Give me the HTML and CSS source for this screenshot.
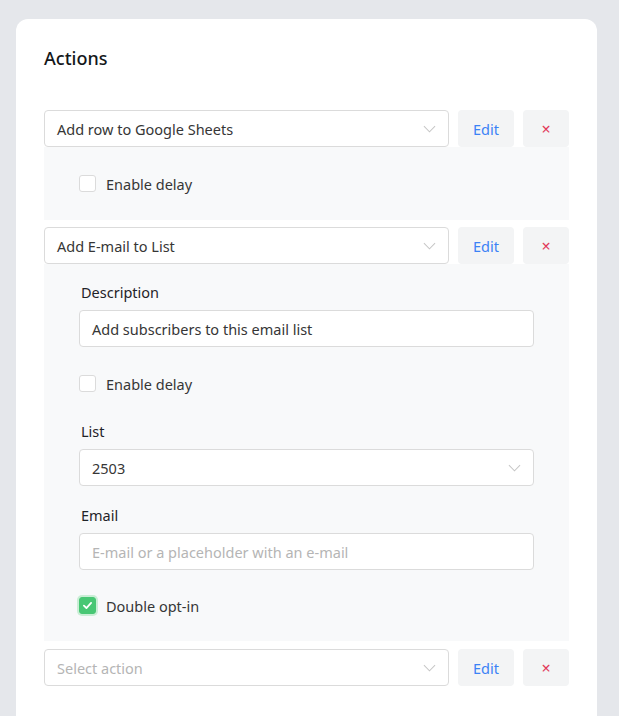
FILE: index.html
```html
<!DOCTYPE html>
<html>
<head>
<meta charset="utf-8">
<link rel="stylesheet" href="styles.css">
</head>
<body>
<div class="card">
  <h2 class="title">Actions</h2>

  <div class="action">
    <div class="row">
      <div class="select"><span>Add row to Google Sheets</span><svg class="chev" viewBox="0 0 14 8"><path d="M1 1l6 6 6-6"/></svg></div>
      <button class="btn edit">Edit</button>
      <button class="btn del">&times;</button>
    </div>
    <div class="panel p1">
      <label class="check"><span class="box"></span><span>Enable delay</span></label>
    </div>
  </div>

  <div class="action">
    <div class="row">
      <div class="select"><span>Add E-mail to List</span><svg class="chev" viewBox="0 0 14 8"><path d="M1 1l6 6 6-6"/></svg></div>
      <button class="btn edit">Edit</button>
      <button class="btn del">&times;</button>
    </div>
    <div class="panel p2">
      <div class="field">
        <div class="label">Description</div>
        <div class="input">Add subscribers to this email list</div>
      </div>
      <label class="check"><span class="box"></span><span>Enable delay</span></label>
      <div class="field">
        <div class="label">List</div>
        <div class="input sel"><span>2503</span><svg class="chev" viewBox="0 0 14 8"><path d="M1 1l6 6 6-6"/></svg></div>
      </div>
      <div class="field">
        <div class="label">Email</div>
        <div class="input ph">E-mail or a placeholder with an e-mail</div>
      </div>
      <label class="check"><span class="box on"><svg viewBox="0 0 12 10"><path d="M2 5.2l2.8 2.6L10 2.2"/></svg></span><span>Double opt-in</span></label>
    </div>
  </div>

  <div class="action">
    <div class="row">
      <div class="select ph"><span>Select action</span><svg class="chev" viewBox="0 0 14 8"><path d="M1 1l6 6 6-6"/></svg></div>
      <button class="btn edit">Edit</button>
      <button class="btn del">&times;</button>
    </div>
  </div>
</div>
</body>
</html>
```

FILE: styles.css
```css
* { box-sizing: border-box; }
html, body { margin: 0; }
body {
  background: #e5e7eb;
  font-family: "Noto Sans", "Open Sans", sans-serif;
  color: #363636;
  padding: 19px 22px 0 16px;
  height: 716px;
  overflow: hidden;
}
.card {
  background: #fff;
  border-radius: 12px;
  padding: 28px 28px 40px;
  min-height: 720px;
}
.title {
  margin: 0 0 41px;
  font-size: 18px;
  font-weight: 500;
  line-height: 22px;
  color: #14171a;
}
.action { margin-bottom: 7px; }
.action + .action + .action { margin-top: 8px; }
.row {
  display: flex;
  gap: 9px;
  height: 37px;
}
.select {
  flex: 1;
  display: flex;
  align-items: center;
  justify-content: space-between;
  border: 1px solid #dbdbdb;
  border-radius: 4px;
  padding: 0 12px 0 12px;
  font-size: 14.5px;
  color: #363636;
  background: #fff;
}
.select.ph, .input.ph { color: #b5b5b5; }
.chev {
  width: 13px;
  height: 8px;
  fill: none;
  stroke: #c6c6c6;
  stroke-width: 1.1;
}
.btn {
  border: none;
  border-radius: 4px;
  background: #f3f4f5;
  font-family: inherit;
  padding: 0;
}
.edit {
  width: 56px;
  color: #3b82f6;
  font-size: 14.5px;
}
.del {
  width: 46px;
  color: #e23b5a;
  font-size: 16px;
}
.panel {
  background: #f8f9fa;
  padding: 0 35px;
  display: flex;
  flex-direction: column;
}
.p1 { height: 73px; justify-content: center; }
.p2 { padding-top: 18px; padding-bottom: 27px; }
.field + .field { margin-top: 19px; }
.label {
  font-size: 14.5px;
  color: #1f2328;
  padding-left: 2px;
  line-height: 20px;
  margin-bottom: 8px;
}
.input {
  height: 37px;
  background: #fff;
  border: 1px solid #dbdbdb;
  border-radius: 4px;
  display: flex;
  align-items: center;
  justify-content: space-between;
  padding: 0 12px;
  font-size: 14.5px;
  color: #363636;
}
.check {
  display: flex;
  align-items: center;
  gap: 10px;
  font-size: 14.5px;
  color: #363636;
  height: 17px;
}
.p2 .check { margin: 28px 0 29px; }
.p2 .check:last-child { margin: 27px 0 0; }
.box {
  width: 17px;
  height: 17px;
  border: 1px solid #dbdbdb;
  border-radius: 3px;
  background: #fff;
  display: flex;
  align-items: center;
  justify-content: center;
}
.box.on {
  background: #48c774;
  border-color: #48c774;
  box-shadow: 0 0 0 2px #c9eed5;
}
.box.on svg {
  width: 11px;
  height: 9px;
  fill: none;
  stroke: #fff;
  stroke-width: 2;
  stroke-linecap: round;
  stroke-linejoin: round;
}
```
